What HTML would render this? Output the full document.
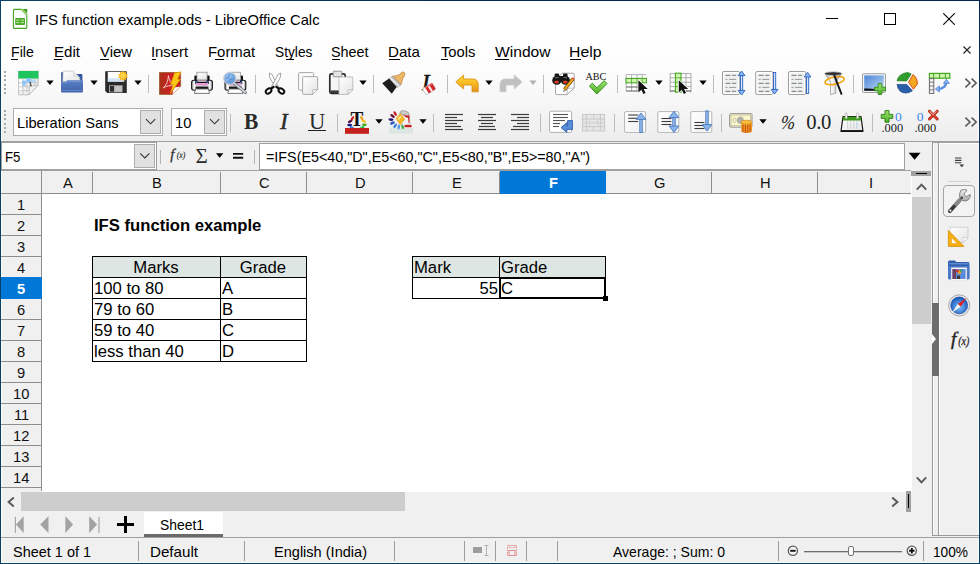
<!DOCTYPE html>
<html lang="en"><head><meta charset="utf-8"><title>IFS function example.ods - LibreOffice Calc</title>
<style>
html,body{margin:0;padding:0;background:#fff;}
body{width:980px;height:564px;overflow:hidden;font-family:"Liberation Sans",sans-serif;}
#win{position:relative;width:980px;height:564px;overflow:hidden;background:#fff;}
.b{position:absolute;box-sizing:border-box;display:block;}
.t{position:absolute;white-space:pre;font-family:"Liberation Sans",sans-serif;}
.ser{font-family:"Liberation Serif",serif;}
u.m{text-decoration:none;border-bottom:1px solid #000;}

</style></head>
<body>
<div id="win">
<div class="b " style="left:0px;top:0px;width:980px;height:1px;z-index:50;background:linear-gradient(90deg,#0a4468,#04244e 60%,#04244e);"></div>
<div class="b " style="left:979px;top:0px;width:1px;height:564px;z-index:50;background:linear-gradient(#04244e,#0a2f5c 30%,#07405f 90%);"></div>
<div class="b " style="left:0px;top:0px;width:1px;height:564px;z-index:50;background:linear-gradient(#0a4468,#06405f);"></div>
<div class="b " style="left:0px;top:563px;width:980px;height:1px;background:#06405f;z-index:51;"></div>
<div class="b " style="left:1px;top:1px;width:978px;height:37px;background:#fff;"></div>
<span class="t " style="left:34.8px;top:11.00px;font-size:15px;line-height:17.23px;color:#000;transform:scaleX(0.9844);transform-origin:0 0;">IFS function example.ods - LibreOffice Calc</span>
<svg class="b" style="left:0;top:0;" width="40" height="38" viewBox="0 0 40 38"><path d="M14.6 9.4 H21.4 L26.8 14.8 V27.4 Q26.8 28.4 25.8 28.4 H14.6 Q13.4 28.4 13.4 27.4 V10.4 Q13.4 9.4 14.6 9.4 Z" fill="#fff" stroke="#43a320" stroke-width="1.1"/><path d="M22.6 9 H27.2 V13.4 Z" fill="#3c9e1c"/><path d="M21.4 9.4 L26.8 14.8" stroke="#8fd06c" stroke-width="1.6"/><rect x="15.2" y="18" width="9.8" height="7" rx="0.8" fill="#4aa828"/><path d="M16.2 20.2 H19.4 M20.8 20.2 H24 M16.2 22.6 H19.4 M20.8 22.6 H24" stroke="#c8f0b0" stroke-width="1"/></svg>
<div class="b " style="left:826px;top:18px;width:12px;height:1px;background:#000;"></div>
<div class="b " style="left:884px;top:13px;width:12px;height:12px;border:1px solid #000;"></div>
<svg class="b" style="left:943px;top:13px;" width="12" height="12" viewBox="0 0 12 12"><path d="M0.3 0.3 L11.7 11.7 M11.7 0.3 L0.3 11.7" stroke="#000" stroke-width="1.1" fill="none"/></svg>
<div class="b " style="left:1px;top:38px;width:978px;height:103px;background:linear-gradient(#ffffff 0%,#fdfdfd 25%,#f7f7f7 60%,#ededed 100%);"></div>
<span class="t " style="left:11px;top:43.00px;font-size:15px;line-height:17.23px;color:#000;transform:scaleX(0.9433);transform-origin:0 0;">File</span>
<div class="b " style="left:11px;top:59px;width:7px;height:1px;background:#000;"></div>
<span class="t " style="left:54px;top:43.00px;font-size:15px;line-height:17.23px;color:#000;transform:scaleX(1.0059);transform-origin:0 0;">Edit</span>
<div class="b " style="left:54px;top:59px;width:8px;height:1px;background:#000;"></div>
<span class="t " style="left:100px;top:43.00px;font-size:15px;line-height:17.23px;color:#000;transform:scaleX(0.9925);transform-origin:0 0;">View</span>
<div class="b " style="left:100px;top:59px;width:9px;height:1px;background:#000;"></div>
<span class="t " style="left:151.4px;top:43.00px;font-size:15px;line-height:17.23px;color:#000;transform:scaleX(0.9863);transform-origin:0 0;">Insert</span>
<div class="b " style="left:152px;top:59px;width:4px;height:1px;background:#000;"></div>
<span class="t " style="left:207.8px;top:43.00px;font-size:15px;line-height:17.23px;color:#000;transform:scaleX(0.9936);transform-origin:0 0;">Format</span>
<div class="b " style="left:215px;top:59px;width:9px;height:1px;background:#000;"></div>
<span class="t " style="left:274.6px;top:43.00px;font-size:15px;line-height:17.23px;color:#000;transform:scaleX(0.9156);transform-origin:0 0;">Styles</span>
<div class="b " style="left:286px;top:59px;width:8px;height:1px;background:#000;"></div>
<span class="t " style="left:331.4px;top:43.00px;font-size:15px;line-height:17.23px;color:#000;transform:scaleX(0.9592);transform-origin:0 0;">Sheet</span>
<div class="b " style="left:332px;top:59px;width:8px;height:1px;background:#000;"></div>
<span class="t " style="left:388.2px;top:43.00px;font-size:15px;line-height:17.23px;color:#000;transform:scaleX(1.0100);transform-origin:0 0;">Data</span>
<div class="b " style="left:389px;top:59px;width:11px;height:1px;background:#000;"></div>
<span class="t " style="left:440.6px;top:43.00px;font-size:15px;line-height:17.23px;color:#000;transform:scaleX(0.9824);transform-origin:0 0;">Tools</span>
<div class="b " style="left:441px;top:59px;width:7px;height:1px;background:#000;"></div>
<span class="t " style="left:494.6px;top:43.00px;font-size:15px;line-height:17.23px;color:#000;transform:scaleX(1.0422);transform-origin:0 0;">Window</span>
<div class="b " style="left:495px;top:59px;width:14px;height:1px;background:#000;"></div>
<span class="t " style="left:569.2px;top:43.00px;font-size:15px;line-height:17.23px;color:#000;transform:scaleX(1.0502);transform-origin:0 0;">Help</span>
<div class="b " style="left:570px;top:59px;width:11px;height:1px;background:#000;"></div>
<svg class="b" style="left:963px;top:46px;" width="8" height="8" viewBox="0 0 8 8"><path d="M0.5 0.5 L7.5 7.5 M7.5 0.5 L0.5 7.5" stroke="#222" stroke-width="1.1" fill="none"/></svg>
<div class="b " style="left:4px;top:71px;width:2px;height:2px;background:#a8a8a8;"></div>
<div class="b " style="left:4px;top:75px;width:2px;height:2px;background:#a8a8a8;"></div>
<div class="b " style="left:4px;top:79px;width:2px;height:2px;background:#a8a8a8;"></div>
<div class="b " style="left:4px;top:84px;width:2px;height:2px;background:#a8a8a8;"></div>
<div class="b " style="left:4px;top:88px;width:2px;height:2px;background:#a8a8a8;"></div>
<div class="b " style="left:4px;top:92px;width:2px;height:2px;background:#a8a8a8;"></div>
<div class="b " style="left:4px;top:110px;width:2px;height:2px;background:#a8a8a8;"></div>
<div class="b " style="left:4px;top:114px;width:2px;height:2px;background:#a8a8a8;"></div>
<div class="b " style="left:4px;top:118px;width:2px;height:2px;background:#a8a8a8;"></div>
<div class="b " style="left:4px;top:123px;width:2px;height:2px;background:#a8a8a8;"></div>
<div class="b " style="left:4px;top:127px;width:2px;height:2px;background:#a8a8a8;"></div>
<div class="b " style="left:4px;top:131px;width:2px;height:2px;background:#a8a8a8;"></div>
<div class="b " style="left:148px;top:75px;width:1px;height:18px;background:#bcbcbc;"></div>
<div class="b " style="left:255px;top:75px;width:1px;height:18px;background:#bcbcbc;"></div>
<div class="b " style="left:373px;top:75px;width:1px;height:18px;background:#bcbcbc;"></div>
<div class="b " style="left:447px;top:75px;width:1px;height:18px;background:#bcbcbc;"></div>
<div class="b " style="left:543px;top:75px;width:1px;height:18px;background:#bcbcbc;"></div>
<div class="b " style="left:617px;top:75px;width:1px;height:18px;background:#bcbcbc;"></div>
<div class="b " style="left:713px;top:75px;width:1px;height:18px;background:#bcbcbc;"></div>
<div class="b " style="left:853px;top:75px;width:1px;height:18px;background:#bcbcbc;"></div>
<div class="b " style="left:230px;top:114px;width:1px;height:18px;background:#bcbcbc;"></div>
<div class="b " style="left:337px;top:114px;width:1px;height:18px;background:#bcbcbc;"></div>
<div class="b " style="left:433px;top:114px;width:1px;height:18px;background:#bcbcbc;"></div>
<div class="b " style="left:540px;top:114px;width:1px;height:18px;background:#bcbcbc;"></div>
<div class="b " style="left:614px;top:114px;width:1px;height:18px;background:#bcbcbc;"></div>
<div class="b " style="left:721px;top:114px;width:1px;height:18px;background:#bcbcbc;"></div>
<div class="b " style="left:872px;top:114px;width:1px;height:18px;background:#bcbcbc;"></div>
<svg class="b" style="left:45.8px;top:80px;" width="8" height="6" viewBox="0 0 8 6"><path d="M0.35 0.6 H7.65 L4 5 Z" fill="#000"/></svg>
<svg class="b" style="left:89.8px;top:80px;" width="8" height="6" viewBox="0 0 8 6"><path d="M0.35 0.6 H7.65 L4 5 Z" fill="#000"/></svg>
<svg class="b" style="left:133.8px;top:80px;" width="8" height="6" viewBox="0 0 8 6"><path d="M0.35 0.6 H7.65 L4 5 Z" fill="#000"/></svg>
<svg class="b" style="left:359px;top:80px;" width="8" height="6" viewBox="0 0 8 6"><path d="M0.35 0.6 H7.65 L4 5 Z" fill="#000"/></svg>
<svg class="b" style="left:484.8px;top:80px;" width="8" height="6" viewBox="0 0 8 6"><path d="M0.35 0.6 H7.65 L4 5 Z" fill="#000"/></svg>
<svg class="b" style="left:654.8px;top:80px;" width="8" height="6" viewBox="0 0 8 6"><path d="M0.35 0.6 H7.65 L4 5 Z" fill="#000"/></svg>
<svg class="b" style="left:698.9px;top:80px;" width="8" height="6" viewBox="0 0 8 6"><path d="M0.35 0.6 H7.65 L4 5 Z" fill="#000"/></svg>
<svg class="b" style="left:528.8px;top:80px;" width="8" height="6" viewBox="0 0 8 6"><path d="M0.35 0.6 H7.65 L4 5 Z" fill="#b0b0b0"/></svg>
<svg class="b" style="left:374.8px;top:119px;" width="8" height="6" viewBox="0 0 8 6"><path d="M0.35 0.2 H7.65 L4 4.7 Z" fill="#000"/></svg>
<svg class="b" style="left:419px;top:119px;" width="8" height="6" viewBox="0 0 8 6"><path d="M0.35 0.2 H7.65 L4 4.7 Z" fill="#000"/></svg>
<svg class="b" style="left:758.8px;top:119px;" width="8" height="6" viewBox="0 0 8 6"><path d="M0.35 0.2 H7.65 L4 4.7 Z" fill="#000"/></svg>
<svg class="b" style="left:964px;top:78px;" width="14" height="10" viewBox="0 0 14 10"><path d="M1.4 0.6 L6 5 L1.4 9.4 M7.6 0.6 L12.2 5 L7.6 9.4" stroke="#555" stroke-width="1.5" fill="none"/></svg>
<svg class="b" style="left:964px;top:117px;" width="14" height="10" viewBox="0 0 14 10"><path d="M1.4 0.6 L6 5 L1.4 9.4 M7.6 0.6 L12.2 5 L7.6 9.4" stroke="#555" stroke-width="1.5" fill="none"/></svg>
<div class="b " style="left:13px;top:108px;width:150px;height:28px;background:#fff;border:1px solid #adadad;"></div>
<span class="t " style="left:16.6px;top:114.00px;font-size:15px;line-height:17.23px;color:#000;transform:scaleX(0.9747);transform-origin:0 0;">Liberation Sans</span>
<div class="b " style="left:140px;top:110px;width:21px;height:24px;background:#e1e1e1;border:1px solid #adadad;"></div>
<svg class="b" style="left:145px;top:118px;" width="12" height="8" viewBox="0 0 12 8"><path d="M1 1.2 L5.6 5.8 L10.2 1.2" stroke="#333" stroke-width="1.1" fill="none"/></svg>
<div class="b " style="left:171px;top:108px;width:56px;height:28px;background:#fff;border:1px solid #adadad;"></div>
<span class="t " style="left:175px;top:114.00px;font-size:15px;line-height:17.23px;color:#000;transform:scaleX(0.9829);transform-origin:0 0;">10</span>
<div class="b " style="left:204px;top:110px;width:21px;height:24px;background:#e1e1e1;border:1px solid #adadad;"></div>
<svg class="b" style="left:209px;top:118px;" width="12" height="8" viewBox="0 0 12 8"><path d="M1 1.2 L5.6 5.8 L10.2 1.2" stroke="#333" stroke-width="1.1" fill="none"/></svg>
<span class="t ser" style="left:243.8px;top:107.4px;font-size:23.8px;line-height:28px;font-weight:bold;color:#2a2a2a;transform:scaleX(0.9);transform-origin:0 0;">B</span>
<span class="t ser" style="left:280px;top:107.2px;font-size:23.4px;line-height:28px;font-style:italic;color:#2a2a2a;-webkit-text-stroke:0.4px #2a2a2a;">I</span>
<span class="t ser" style="left:308.6px;top:107.4px;font-size:23.4px;line-height:28px;color:#2a2a2a;transform:scaleX(0.96);transform-origin:0 0;">U</span>
<div class="b " style="left:308px;top:130px;width:18px;height:1px;background:#222;"></div>
<span class="t ser" style="left:778.2px;top:109.6px;font-size:20px;line-height:24px;color:#222;transform:skewX(-14deg) scaleX(0.86);transform-origin:0 100%;">%</span>
<span class="t ser" style="left:806.2px;top:108.8px;font-size:20.6px;line-height:26px;color:#222;letter-spacing:-0.3px;">0.0</span>
<svg class="b" style="left:0;top:62px;" width="980" height="80" viewBox="0 62 980 80"><defs>
<linearGradient id="gPage" x1="0" y1="0" x2="1" y2="1"><stop offset="0" stop-color="#ffffff"/><stop offset="1" stop-color="#e4e4e4"/></linearGradient>
<linearGradient id="gBlue" x1="0" y1="0" x2="0" y2="1"><stop offset="0" stop-color="#2f6fd8"/><stop offset="1" stop-color="#6aa2ee"/></linearGradient>
<linearGradient id="gPrn" x1="0" y1="0" x2="1" y2="0"><stop offset="0" stop-color="#8e8e8e"/><stop offset="0.12" stop-color="#fafafa"/><stop offset="0.3" stop-color="#d0d0d0"/><stop offset="0.7" stop-color="#d0d0d0"/><stop offset="0.88" stop-color="#fafafa"/><stop offset="1" stop-color="#8e8e8e"/></linearGradient>
<linearGradient id="gUndo" x1="0" y1="0" x2="0" y2="1"><stop offset="0" stop-color="#ffdc3c"/><stop offset="0.5" stop-color="#f8b820"/><stop offset="1" stop-color="#e09020"/></linearGradient>
<linearGradient id="gFolder" x1="0" y1="0" x2="0" y2="1"><stop offset="0" stop-color="#5a80c4"/><stop offset="1" stop-color="#3f62aa"/></linearGradient>
<linearGradient id="gRed" x1="0" y1="0" x2="1" y2="0"><stop offset="0" stop-color="#a8341a"/><stop offset="0.5" stop-color="#cc2020"/><stop offset="1" stop-color="#c41c1c"/></linearGradient>
<linearGradient id="gSky" x1="0" y1="0" x2="1" y2="1"><stop offset="0" stop-color="#4f86d8"/><stop offset="0.6" stop-color="#8fb8ea"/><stop offset="1" stop-color="#d8e8f8"/></linearGradient>
<linearGradient id="gGreen" x1="0" y1="0" x2="0" y2="1"><stop offset="0" stop-color="#9ae46c"/><stop offset="1" stop-color="#4cae24"/></linearGradient>
<linearGradient id="gFunnel" x1="0" y1="0" x2="1" y2="0"><stop offset="0" stop-color="#9a9a9a"/><stop offset="0.4" stop-color="#ffffff"/><stop offset="1" stop-color="#8a8a8a"/></linearGradient>
<linearGradient id="gSilver" x1="0" y1="0" x2="0" y2="1"><stop offset="0" stop-color="#f2f2f2"/><stop offset="1" stop-color="#a8a8a8"/></linearGradient>
<radialGradient id="gLens" cx="0.4" cy="0.4" r="0.7"><stop offset="0" stop-color="#a8d0f8"/><stop offset="1" stop-color="#4a86d0"/></radialGradient>
<radialGradient id="gComp" cx="0.5" cy="0.6" r="0.6"><stop offset="0" stop-color="#7fc0ff"/><stop offset="1" stop-color="#1452b8"/></radialGradient>
</defs><path d="M18.6 71.2 H38.2 V85.2 L29 94.8 H18.6 Z" fill="url(#gPage)" stroke="#b4b4b4" stroke-width="0.8"/><rect x="18.4" y="71" width="20" height="7.6" fill="#1ec45e"/><path d="M23 78.6 V94 M27 78.6 V92 M31.2 78.6 V88 M35 78.6 V86 M18.6 82.6 H38 M18.6 86.6 H36 M18.6 90.6 H32" stroke="#c4c4c4" stroke-width="0.9" fill="none"/><rect x="26.2" y="78.2" width="5" height="4.4" fill="#8cc4fa"/><rect x="22.2" y="80.6" width="3.6" height="5" fill="#8cc4fa"/><rect x="31.6" y="79.6" width="3.6" height="2.6" fill="#b4d8fb"/><rect x="19.3" y="80" width="2.6" height="2.3" fill="#fff"/><rect x="19.3" y="84" width="2.6" height="2.3" fill="#fff"/><rect x="19.3" y="88" width="2.6" height="2.3" fill="#fff"/><path d="M30.3 82 v3.6 h1.6" stroke="#333" stroke-width="1" fill="none"/><path d="M38.2 85.2 L29 94.8 L29.6 86.6 Z" fill="#f2f2f2" stroke="#b0b0b0" stroke-width="0.7"/><path d="M61.2 73.2 Q61.2 72 62.4 72 H64 V83 H61.2 Z" fill="#2c4f96"/><path d="M72 74 H81.6 Q82.4 74 82.4 75 V83 H72 Z" fill="#3558a0"/><path d="M62.8 82 L63 72.6 Q63 71.2 64.6 71.2 H73.2 L79.6 77.6 L80 82 Z" fill="url(#gPage)" stroke="#c0c0c0" stroke-width="0.7"/><path d="M73.2 71.2 L79.6 77.6 L73 77 Z" fill="#e0e0e0"/><path d="M61 82.2 Q61 81.4 62 81.4 L66 81.4 L67.2 80.2 H82 Q83 80.2 83 81.2 V91.6 Q83 92.6 82 92.6 H62 Q61 92.6 61 91.6 Z" fill="url(#gFolder)"/><path d="M61.6 82.6 H66.4 L67.6 81.4 H82.4" stroke="#7c9ad4" stroke-width="0.8" fill="none"/><path d="M61.4 90.4 H82.6" stroke="#6f8fd0" stroke-width="0.8"/><path d="M105.2 71.2 H126.8 V93 H107.2 L105.2 91 Z" fill="#2a2a2a"/><rect x="107.8" y="72" width="16.4" height="9.6" fill="#fdfdfd"/><rect x="107.8" y="78.4" width="16.4" height="3.2" fill="#cfe2f8"/><rect x="109" y="85.2" width="13.6" height="7.2" fill="#a4a4a4"/><rect x="110" y="86" width="4" height="5.6" fill="#2e2e2e"/><rect x="114.6" y="86" width="7" height="5.8" fill="#c4c4c4"/><path d="M123 70.6 l1.1 2 2.1-1 -0.3 2.3 2.2 0.4 -1.6 1.6 1.6 1.6 -2.2 0.4 0.3 2.3 -2.1-1 -1.1 2 -1.1-2 -2.1 1 0.3-2.3 -2.2-0.4 1.6-1.6 -1.6-1.6 2.2-0.4 -0.3-2.3 2.1 1 Z" fill="#f8b818"/><circle cx="123" cy="75.6" r="2.6" fill="#fcd24a"/><path d="M159.5 72.5 H180.6 V86.4 L172.4 94.4 H159.5 Z" fill="url(#gRed)" stroke="#a8643c" stroke-width="1"/><path d="M163 88 C166 86 168 82 168.4 75.6 C169 80 171 84 174.4 86 C170 85 166 86 163 88 Z" fill="none" stroke="#f4d0d0" stroke-width="0.9"/><path d="M180.6 86.4 L172.4 94.4 L173.6 87.6 Z" fill="#fff4f0"/><path d="M174.6 72.8 L181 72 L177.6 79.2 L180.4 79.2 L170.4 93.6 L173 84.4 L170.6 84.4 Z" fill="#fbc812" stroke="#dc8a10" stroke-width="0.8" stroke-linejoin="round"/><rect x="194.4" y="75.4" width="15.2" height="9" rx="1" fill="#111"/><rect x="197" y="72.3" width="10" height="8.2" fill="url(#gPage)" stroke="#a5a5a5" stroke-width="0.8"/><rect x="191.6" y="80.2" width="20.8" height="10" rx="2.2" fill="url(#gPrn)" stroke="#1a1a1a" stroke-width="1.1"/><rect x="195.2" y="76" width="13.6" height="8" fill="#111"/><rect x="197" y="72.3" width="10" height="7.6" fill="url(#gPage)" stroke="#a5a5a5" stroke-width="0.8"/><rect x="197.4" y="80.4" width="9.2" height="1.4" fill="#f0d0e8"/><rect x="195.8" y="83" width="12.4" height="2.4" fill="#e59ad0"/><path d="M195.6 81.2 l1.4 1.8 M208.4 81.2 l-1.4 1.8" stroke="#3a6fd0" stroke-width="1.2"/><rect x="195.6" y="86.6" width="12.8" height="2.6" fill="#1a1a1a"/><path d="M195.6 89 H208.4 L209.6 93.4 H194.4 Z" fill="#fff" stroke="#6a6a6a" stroke-width="0.9"/><rect x="227.8" y="75.4" width="15.2" height="9" rx="1" fill="#111"/><rect x="230.4" y="72.3" width="10" height="8.2" fill="url(#gPage)" stroke="#a5a5a5" stroke-width="0.8"/><rect x="225.0" y="80.2" width="20.8" height="10" rx="2.2" fill="url(#gPrn)" stroke="#1a1a1a" stroke-width="1.1"/><rect x="228.6" y="76" width="13.6" height="8" fill="#111"/><rect x="230.4" y="72.3" width="10" height="7.6" fill="url(#gPage)" stroke="#a5a5a5" stroke-width="0.8"/><rect x="230.8" y="80.4" width="9.2" height="1.4" fill="#f0d0e8"/><rect x="229.20000000000002" y="83" width="12.4" height="2.4" fill="#e59ad0"/><path d="M229.0 81.2 l1.4 1.8 M241.8 81.2 l-1.4 1.8" stroke="#3a6fd0" stroke-width="1.2"/><rect x="229.0" y="86.6" width="12.8" height="2.6" fill="#1a1a1a"/><path d="M229.0 89 H241.8 L243.0 93.4 H227.8 Z" fill="#fff" stroke="#6a6a6a" stroke-width="0.9"/><path d="M234 83 L245.4 92.6" stroke="#707880" stroke-width="3" stroke-linecap="round"/><path d="M234 83 L245.2 92.4" stroke="#d8dde2" stroke-width="1.4" stroke-linecap="round"/><circle cx="229.8" cy="78.4" r="6" fill="url(#gLens)" stroke="#c4ccd4" stroke-width="1.3"/><path d="M226 78 h3 v-3 M230 82 v-3 h3" stroke="#2a64b8" stroke-width="0.9" fill="none" opacity="0.7"/><path d="M269.4 73 Q268.6 76 271 80 L276.6 88.4 L278.4 86.4 L271.6 74 Z" fill="#fff" stroke="#8c8c8c" stroke-width="0.8"/><path d="M280.6 73 Q281.4 76 279 80 L273.4 88.4 L271.6 86.4 L278.4 74 Z" fill="#fff" stroke="#8c8c8c" stroke-width="0.8"/><ellipse cx="268.6" cy="91" rx="3.2" ry="2.2" transform="rotate(-38 268.6 91)" fill="none" stroke="#0a0a0a" stroke-width="1.9"/><ellipse cx="281.4" cy="91" rx="3.2" ry="2.2" transform="rotate(38 281.4 91)" fill="none" stroke="#0a0a0a" stroke-width="1.9"/><path d="M271 88.6 L274.2 86.4 M279 88.6 L275.8 86.4" stroke="#0a0a0a" stroke-width="2.2"/><rect x="298.6" y="72.6" width="15.0" height="17.60000000000001" rx="0.9" fill="#fbfbfb" stroke="#a8a8a8" stroke-width="1"/><path d="M303.5 76.6 H316.70000000000005 Q317.6 76.6 317.6 77.5 V89.4 L312.6 94.4 H303.5 Q302.6 94.4 302.6 93.5 V77.5 Q302.6 76.6 303.5 76.6 Z" fill="url(#gPage)" stroke="#a8a8a8" stroke-width="1"/><path d="M317.6 89.4 L312.6 94.4 L312.90000000000003 89.7 Z" fill="#fff" stroke="#a8a8a8" stroke-width="0.8"/><rect x="329.8" y="73.8" width="15.4" height="19.6" rx="1.6" fill="#f6f6f6" stroke="#2a2a2a" stroke-width="1.7"/><rect x="330.6" y="90.4" width="14" height="2.6" fill="#3a3a3a"/><rect x="333.2" y="71.2" width="8.6" height="5.6" rx="0.8" fill="#e4e4e4" stroke="#8a8a8a" stroke-width="0.9"/><path d="M339 77 H352.8 V89.6 L348 94.4 H339 Z" fill="url(#gPage)" stroke="#b4b4b4" stroke-width="0.8"/><path d="M352.8 89.6 L348 94.4 L348.2 89.8 Z" fill="#fff" stroke="#a8a8a8" stroke-width="0.7"/><path d="M392.4 76.4 L396.8 75.6 Q399.6 75 401 73 Q402.6 71.4 404.2 72.4 Q405.6 73.6 404.4 75.8 Q402.4 78.4 402.2 80.6 L401 84.6 Z" fill="#eab868" stroke="#c8843a" stroke-width="0.8"/><path d="M389 78.8 L392.4 76.2 L401 84.8 L397 87.4 Z" fill="#c4c4c4" stroke="#8a8a8a" stroke-width="0.6"/><path d="M390.4 77.8 L399 86.2" stroke="#f4f4f4" stroke-width="1.2"/><path d="M382.2 83.2 L389 78.6 L396.6 87 L391.8 93.8 Z" fill="#1c1c1c"/><text x="422" y="90.2" font-family="Liberation Serif,serif" font-style="italic" font-size="22.4" stroke="#111" stroke-width="0.6" fill="#111">I</text><g transform="rotate(-32 429 89)"><rect x="423.4" y="85.4" width="11.4" height="7.2" rx="1.2" fill="#fff" stroke="#b0b0b0" stroke-width="0.7"/><rect x="426.4" y="85.4" width="8.4" height="7.2" rx="1" fill="#d42828"/><rect x="429.2" y="85.4" width="2.2" height="7.2" fill="#f4e8e8"/><rect x="426.4" y="85.4" width="8.4" height="1.2" fill="#e87070"/></g><path d="M455.8 82 L463.6 75 V79 H472.6 Q478.2 79 478.2 84.6 V91.8 H472 V86.6 Q472 85 470.4 85 H463.6 V89 Z" fill="url(#gUndo)" stroke="#dc9418" stroke-width="0.9" stroke-linejoin="round"/><path d="M522 82 L514.2 75 V79 H505.4 Q500 79 500 84.6 V91.8 H506 V86.6 Q506 85 507.6 85 H514.2 V89 Z" fill="#c0c0c0" stroke="#cacaca" stroke-width="0.8" stroke-linejoin="round"/><path d="M555.6 80 V93.4 Q555.6 94.6 556.8 94.6 H567 L574.2 88 V74.4 Q574.2 73.2 573 73.2 H562 Z" fill="#fff" stroke="#9a9a9a" stroke-width="0.9"/><path d="M567 94.6 L567.4 88.4 L574.2 88" fill="none" stroke="#b0b0b0" stroke-width="0.8"/><rect x="554.6" y="73.4" width="4.6" height="5" rx="1.4" fill="#161616"/><rect x="563" y="73.4" width="4.6" height="5" rx="1.4" fill="#161616"/><rect x="558.6" y="76" width="5" height="4" fill="#161616"/><ellipse cx="556.8" cy="80.4" rx="4.6" ry="4.4" fill="#161616"/><ellipse cx="565.4" cy="80.4" rx="4.6" ry="4.4" fill="#161616"/><ellipse cx="556.6" cy="82" rx="2.4" ry="1.6" fill="#d83820"/><ellipse cx="565.2" cy="82" rx="2.4" ry="1.6" fill="#d83820"/><path d="M555 77.6 h3.4 M563.6 77.6 h3.4" stroke="#8a8a8a" stroke-width="0.8"/><path d="M573.2 78.6 L564.4 89.6" stroke="#6a4a10" stroke-width="3.4" stroke-linecap="butt"/><path d="M573.2 78.6 L564.4 89.6" stroke="#f8a818" stroke-width="2" stroke-linecap="butt"/><path d="M564.9 89 L563 91.6 L566 90.4 Z" fill="#f0d8a8" stroke="#555" stroke-width="0.5"/><path d="M572.4 77.8 l1.8 1.4" stroke="#e04848" stroke-width="1.6"/><text x="585.4" y="80" font-family="Liberation Serif,serif" font-size="10.4" textLength="20.8" lengthAdjust="spacingAndGlyphs" fill="#111">ABC</text><path d="M589.4 86 L592.4 83.2 L596.8 87.8 L604.2 80.6 L607 83.6 L596.8 94 Z" fill="url(#gGreen)" stroke="#2e8a18" stroke-width="0.9" stroke-linejoin="round"/><rect x="626.2" y="74.6" width="20" height="16.4" fill="#fff"/><path d="M626.2 74.6 H646 M626.2 74.6 V91 M631.6 74.6 V91 M637 74.6 V91 M642.2 74.6 V91" stroke="#a8a8a8" stroke-width="0.9" fill="none"/><path d="M626.2 87 H640 M626.2 91 H640" stroke="#5a5a5a" stroke-width="1.1" fill="none"/><rect x="626" y="78.4" width="20.4" height="4.4" fill="#d0f4b0" stroke="#44a820" stroke-width="1.1"/><path d="M631.6 78.4 v4.4 M637 78.4 v4.4 M642.2 78.4 v4.4" stroke="#44a820" stroke-width="0.8"/><path d="M638.4 80.2 V92.4 L641.4 89.8 L643.4 94.0 L645.6 93.0 L643.6999999999999 89.0 H647.8 Z" fill="#111" stroke="#fff" stroke-width="1.3" stroke-linejoin="round" paint-order="stroke"/><rect x="670.2" y="73.6" width="20.8" height="18" fill="#fff"/><path d="M670.2 73.6 H691 M670.2 77.8 H691 M670.2 82.2 H691 M670.2 86.6 H691 M670.2 73.6 V92.4 M686 73.6 V92 M691 73.6 V92.4" stroke="#a0a0a0" stroke-width="0.9" fill="none"/><path d="M670.2 91 H691" stroke="#5a5a5a" stroke-width="1.1"/><rect x="675.4" y="73.2" width="5.6" height="19" fill="#d0f4b0" stroke="#44a820" stroke-width="1.1"/><path d="M675.4 77.8 h5.6 M675.4 82.2 h5.6 M675.4 86.6 h5.6" stroke="#44a820" stroke-width="0.8"/><path d="M678.8 80.2 V92.4 L681.8 89.8 L683.8 94.0 L686.0 93.0 L684.0999999999999 89.0 H688.1999999999999 Z" fill="#111" stroke="#fff" stroke-width="1.3" stroke-linejoin="round" paint-order="stroke"/><rect x="722.5" y="71.5" width="17.299999999999955" height="23.0" rx="1.5" fill="#fff" stroke="#9c9c9c" stroke-width="1"/><rect x="724.3" y="73.5" width="13.6" height="19.5" fill="#eef1ef"/><path d="M725.5 75.4 h5 M732 75.4 h4.2" stroke="#8f8f8f" stroke-width="1.1"/><path d="M725.5 79.4 h2 M729 79.4 h7.2" stroke="#9a9a9a" stroke-width="1"/><path d="M725.5 83.4 h5 M732 83.4 h4.2" stroke="#8f8f8f" stroke-width="1.1"/><path d="M725.5 87.4 h2 M729 87.4 h7.2" stroke="#9a9a9a" stroke-width="1"/><path d="M725.5 91.4 h5 M732 91.4 h4.2" stroke="#8f8f8f" stroke-width="1.1"/><rect x="740.5" y="75.1" width="2.2" height="15.800000000000011" fill="#d4e4fa" stroke="#2a62c4" stroke-width="0.9"/><path d="M741.6 71 L745.0 75.6 H738.2 Z" fill="#8fb8f0" stroke="#2a62c4" stroke-width="0.9" stroke-linejoin="round"/><path d="M741.6 95 L745.0 90.4 H738.2 Z" fill="#8fb8f0" stroke="#2a62c4" stroke-width="0.9" stroke-linejoin="round"/><rect x="755.7" y="71.5" width="17.299999999999955" height="23.0" rx="1.5" fill="#fff" stroke="#9c9c9c" stroke-width="1"/><rect x="757.5" y="73.5" width="13.6" height="19.5" fill="#eef1ef"/><path d="M758.7 75.4 h5 M765.2 75.4 h4.2" stroke="#8f8f8f" stroke-width="1.1"/><path d="M758.7 79.4 h2 M762.2 79.4 h7.2" stroke="#9a9a9a" stroke-width="1"/><path d="M758.7 83.4 h5 M765.2 83.4 h4.2" stroke="#8f8f8f" stroke-width="1.1"/><path d="M758.7 87.4 h2 M762.2 87.4 h7.2" stroke="#9a9a9a" stroke-width="1"/><path d="M758.7 91.4 h5 M765.2 91.4 h4.2" stroke="#8f8f8f" stroke-width="1.1"/><rect x="773.5" y="72.5" width="2.2" height="17.400000000000006" fill="#d4e4fa" stroke="#2a62c4" stroke-width="0.9"/><path d="M774.6 94 L778.0 89.4 H771.2 Z" fill="#8fb8f0" stroke="#2a62c4" stroke-width="0.9" stroke-linejoin="round"/><rect x="788.5" y="71.5" width="17.299999999999955" height="23.0" rx="1.5" fill="#fff" stroke="#9c9c9c" stroke-width="1"/><rect x="790.3" y="73.5" width="13.6" height="19.5" fill="#eef1ef"/><path d="M791.5 75.4 h5 M798 75.4 h4.2" stroke="#8f8f8f" stroke-width="1.1"/><path d="M791.5 79.4 h2 M795 79.4 h7.2" stroke="#9a9a9a" stroke-width="1"/><path d="M791.5 83.4 h5 M798 83.4 h4.2" stroke="#8f8f8f" stroke-width="1.1"/><path d="M791.5 87.4 h2 M795 87.4 h7.2" stroke="#9a9a9a" stroke-width="1"/><path d="M791.5 91.4 h5 M798 91.4 h4.2" stroke="#8f8f8f" stroke-width="1.1"/><rect x="806.5" y="76.5" width="2.2" height="17.0" fill="#d4e4fa" stroke="#2a62c4" stroke-width="0.9"/><path d="M807.6 72.4 L811.0 77.0 H804.2 Z" fill="#8fb8f0" stroke="#2a62c4" stroke-width="0.9" stroke-linejoin="round"/><path d="M825 73.6 H841.6 L835.8 82.4 V93.2 L830.6 94.6 V82.4 Z" fill="url(#gFunnel)" stroke="#8a8a8a" stroke-width="0.7"/><ellipse cx="833.2" cy="73.6" rx="8.4" ry="1.7" fill="#2a2a2a" stroke="#9a9a9a" stroke-width="0.7"/><ellipse cx="834.6" cy="80.6" rx="9.8" ry="3.6" transform="rotate(-12 834.6 80.6)" fill="none" stroke="#f4a410" stroke-width="1.6"/><path d="M834.4 75.6 L841.4 93.8" stroke="#141414" stroke-width="1.9" stroke-linecap="round"/><rect x="862.6" y="73.8" width="22.8" height="18.6" rx="1" fill="#fff" stroke="#8a8a8a" stroke-width="0.9"/><rect x="864.2" y="75.4" width="19.6" height="15.4" fill="url(#gSky)"/><path d="M864.2 88.6 Q872 88 883.8 90.4 V90.8 H864.2 Z" fill="#111"/><path d="M878.2 83.6 h3.6 v3.6 h3.6 v3.6 h-3.6 v3.6 h-3.6 v-3.6 h-3.6 v-3.6 h3.6 Z" fill="url(#gGreen)" stroke="#2e8a18" stroke-width="0.9" stroke-linejoin="round"/><path d="M897 80.8 Q898.6 73.6 907.6 72.4 L911.2 74 L906.6 81 Z" fill="#2f9e2c" stroke="#1f7a1c" stroke-width="0.7"/><path d="M913 74.6 Q917.6 78 917.4 84 L913.4 89.2 L908.6 82.2 Z" fill="#f4a820" stroke="#d04010" stroke-width="0.9" stroke-linejoin="round"/><path d="M897 84.4 H906.8 L912.4 90.8 Q906 95 900.4 91.4 Q897.4 88.6 897 84.4 Z" fill="#2a5eaa" stroke="#1c437c" stroke-width="0.7"/><rect x="929.4" y="73.4" width="20.4" height="4.8" fill="#d0f4b0" stroke="#44a820" stroke-width="1.2"/><path d="M933.6 73.4 v4.8 M939.6 73.4 v4.8 M945.4 73.4 v4.8" stroke="#44a820" stroke-width="1"/><rect x="929.4" y="78.6" width="4.4" height="14.8" fill="#f4f4f4" stroke="#6a6a6a" stroke-width="1"/><path d="M929.4 82.2 h4.4 M929.4 86 h4.4 M929.4 89.8 h4.4" stroke="#6a6a6a" stroke-width="0.9"/><path d="M938.4 89 Q945.6 88.6 946.4 82" fill="none" stroke="#5a90e0" stroke-width="2.2"/><path d="M935.4 89 L939.4 86 V92 Z M946.4 79.2 L949.4 83.4 H943.4 Z" fill="#8ab4f0" stroke="#4a80d8" stroke-width="0.8" stroke-linejoin="round"/><ellipse cx="352.4" cy="118.4" rx="2.5" ry="1.25" transform="rotate(-55 352.4 118.4)" fill="#d02020"/><ellipse cx="350.2" cy="121.4" rx="2.5" ry="1.25" transform="rotate(-25 350.2 121.4)" fill="#5a1040"/><ellipse cx="349.6" cy="125" rx="2.5" ry="1.25" transform="rotate(0 349.6 125)" fill="#1a1a8a"/><ellipse cx="351.8" cy="127.6" rx="2.5" ry="1.25" transform="rotate(20 351.8 127.6)" fill="#3a7ae0"/><ellipse cx="361.8" cy="118.2" rx="2.5" ry="1.25" transform="rotate(55 361.8 118.2)" fill="#f0a020"/><ellipse cx="363.8" cy="121.2" rx="2.5" ry="1.25" transform="rotate(25 363.8 121.2)" fill="#f8c820"/><ellipse cx="364.4" cy="124.8" rx="2.5" ry="1.25" transform="rotate(0 364.4 124.8)" fill="#4aa828"/><ellipse cx="362.2" cy="127.6" rx="2.5" ry="1.25" transform="rotate(-20 362.2 127.6)" fill="#20c040"/><text x="350.6" y="125.6" font-family="Liberation Serif,serif" font-weight="bold" font-size="20.4" textLength="12.8" lengthAdjust="spacingAndGlyphs" fill="#111">T</text><rect x="345" y="128" width="24" height="5.8" fill="#c4201c"/><rect x="389.2" y="128" width="23.8" height="5.8" fill="#dee6e3"/><ellipse cx="395.2" cy="113.6" rx="2.6" ry="1.3" transform="rotate(60 395.2 113.6)" fill="#d02020"/><ellipse cx="392.6" cy="116" rx="2.6" ry="1.3" transform="rotate(35 392.6 116)" fill="#6a1030"/><ellipse cx="391" cy="119.6" rx="2.6" ry="1.3" transform="rotate(5 391 119.6)" fill="#2a1a7a"/><ellipse cx="392.4" cy="123" rx="2.6" ry="1.3" transform="rotate(-25 392.4 123)" fill="#2a5ac0"/><ellipse cx="395.2" cy="125.8" rx="2.6" ry="1.3" transform="rotate(-55 395.2 125.8)" fill="#3a80e0"/><ellipse cx="398.8" cy="127" rx="2.6" ry="1.3" transform="rotate(-80 398.8 127)" fill="#5a9af0"/><ellipse cx="402.6" cy="126.6" rx="2.6" ry="1.3" transform="rotate(-100 402.6 126.6)" fill="#30b030"/><path d="M400 112 Q405 110.4 409 113.6 L410 124 L403 126 L399 116 Z" fill="#f4f4f4" stroke="#b0b0b0" stroke-width="0.7"/><ellipse cx="404.6" cy="113" rx="4.4" ry="2" transform="rotate(15 404.6 113)" fill="#d0d0d0" stroke="#909090" stroke-width="0.7"/><path d="M403 114.6 Q406 116.4 409.4 115.2 L409.4 123.4 Q408.4 123.6 408.4 121 L408 117.6 Q405 118 403 114.6 Z M404.6 125 H411.6 V127.2 H404.6 Z" fill="#c8201c"/><path d="M396.2 118.4 L400.6 113.6 L404.6 119.4 L400.2 124.6 Z" fill="#f8b820" stroke="#e09010" stroke-width="0.6"/><path d="M397.6 118.6 L400.6 115.4 L401.6 117 L398.8 120.2 Z" fill="#fde08a"/><path d="M445 114.5 H463" stroke="#3c3c3c" stroke-width="1.2"/><path d="M445 117.5 H457" stroke="#3c3c3c" stroke-width="1.2"/><path d="M445 120.5 H463" stroke="#3c3c3c" stroke-width="1.2"/><path d="M445 123.5 H457" stroke="#3c3c3c" stroke-width="1.2"/><path d="M445 126.5 H461" stroke="#3c3c3c" stroke-width="1.2"/><path d="M445 129.5 H463" stroke="#3c3c3c" stroke-width="1.2"/><path d="M478 114.5 H496" stroke="#3c3c3c" stroke-width="1.2"/><path d="M481 117.5 H493" stroke="#3c3c3c" stroke-width="1.2"/><path d="M478 120.5 H496" stroke="#3c3c3c" stroke-width="1.2"/><path d="M481 123.5 H493" stroke="#3c3c3c" stroke-width="1.2"/><path d="M479 126.5 H495" stroke="#3c3c3c" stroke-width="1.2"/><path d="M478 129.5 H496" stroke="#3c3c3c" stroke-width="1.2"/><path d="M511 114.5 H529" stroke="#3c3c3c" stroke-width="1.2"/><path d="M517 117.5 H529" stroke="#3c3c3c" stroke-width="1.2"/><path d="M511 120.5 H529" stroke="#3c3c3c" stroke-width="1.2"/><path d="M517 123.5 H529" stroke="#3c3c3c" stroke-width="1.2"/><path d="M513 126.5 H529" stroke="#3c3c3c" stroke-width="1.2"/><path d="M511 129.5 H529" stroke="#3c3c3c" stroke-width="1.2"/><rect x="549.6" y="111.2" width="22.0" height="21.200000000000003" rx="1.2" fill="#fff" stroke="#b0b0b0" stroke-width="1"/><path d="M553 114.5 H568" stroke="#555" stroke-width="1.1"/><path d="M553 117.5 H568" stroke="#555" stroke-width="1.1"/><path d="M553 120.5 H565" stroke="#555" stroke-width="1.1"/><path d="M553 123.5 H560" stroke="#555" stroke-width="1.1"/><path d="M553 126.5 H559" stroke="#555" stroke-width="1.1"/><path d="M567.6 120.6 H572.4 V129.4 H566.8 V132.4 L561 127.6 L566.8 122.8 V125.8 H567.6 Z" fill="#5a8ed8" stroke="#2a5cae" stroke-width="0.9" stroke-linejoin="round"/><rect x="582.4" y="114.4" width="22.2" height="16.6" fill="#e6e6e6" stroke="#c6c6c6" stroke-width="0.9"/><path d="M586.6 114.4 V131 M600.4 114.4 V131 M593.6 114.4 V119 M593.6 126.6 V131 M582.4 119 H604.6 M582.4 123 H586.6 M600.4 123 H604.6 M582.4 126.6 H604.6" stroke="#c6c6c6" stroke-width="0.9" fill="none"/><path d="M588.4 122.8 H598.8 M590.4 120.8 L588.2 122.8 L590.4 124.8 M596.8 120.8 L599 122.8 L596.8 124.8" stroke="#cfcfcf" stroke-width="1" fill="none"/><rect x="624.6" y="111.6" width="21.0" height="20.80000000000001" rx="1.4" fill="#fff" stroke="#b4b4b4" stroke-width="1"/><rect x="626.2" y="113" width="17.8" height="18" fill="url(#gPage)" opacity="0.6"/><path d="M628.2 115 H638.2" stroke="#3c3c3c" stroke-width="1.1"/><path d="M628.2 118.3 H638.2" stroke="#3c3c3c" stroke-width="1.1"/><path d="M628.2 121.5 H638.2" stroke="#3c3c3c" stroke-width="1.1"/><rect x="639.8" y="118.9" width="2.4" height="13.599999999999994" fill="#9cc0ee" stroke="#4a78bc" stroke-width="0.9"/><path d="M641 113 L645.8 119.4 H636.2 Z" fill="#8ab6ec" stroke="#4a78bc" stroke-width="0.9" stroke-linejoin="round"/><rect x="657.8" y="111.6" width="21.0" height="20.80000000000001" rx="1.4" fill="#fff" stroke="#b4b4b4" stroke-width="1"/><rect x="659.4" y="113" width="17.8" height="18" fill="url(#gPage)" opacity="0.6"/><path d="M661.4 118.5 H671.4" stroke="#3c3c3c" stroke-width="1.1"/><path d="M661.4 121.5 H671.4" stroke="#3c3c3c" stroke-width="1.1"/><path d="M661.4 124.5 H671.4" stroke="#3c3c3c" stroke-width="1.1"/><rect x="672.8" y="117.10000000000001" width="2.4" height="9.399999999999991" fill="#9cc0ee" stroke="#4a78bc" stroke-width="0.9"/><path d="M674 111.2 L678.8 117.60000000000001 H669.2 Z" fill="#8ab6ec" stroke="#4a78bc" stroke-width="0.9" stroke-linejoin="round"/><path d="M674 132.4 L678.8 126.0 H669.2 Z" fill="#8ab6ec" stroke="#4a78bc" stroke-width="0.9" stroke-linejoin="round"/><rect x="690.8" y="111.6" width="21.0" height="20.80000000000001" rx="1.4" fill="#fff" stroke="#b4b4b4" stroke-width="1"/><rect x="692.4" y="113" width="17.8" height="18" fill="url(#gPage)" opacity="0.6"/><path d="M694.4 122.5 H704.4" stroke="#3c3c3c" stroke-width="1.1"/><path d="M694.4 125.5 H704.4" stroke="#3c3c3c" stroke-width="1.1"/><path d="M694.4 128.5 H704.4" stroke="#3c3c3c" stroke-width="1.1"/><rect x="705.8" y="110.9" width="2.4" height="14.199999999999989" fill="#9cc0ee" stroke="#4a78bc" stroke-width="0.9"/><path d="M707 131 L711.8 124.6 H702.2 Z" fill="#8ab6ec" stroke="#4a78bc" stroke-width="0.9" stroke-linejoin="round"/><rect x="729.6" y="113.6" width="22.4" height="13.6" rx="1" fill="#fdf8cc" stroke="#8a8a8a" stroke-width="0.9"/><rect x="731" y="115" width="19.6" height="10.8" fill="none" stroke="#a8a890" stroke-width="0.7"/><ellipse cx="740.4" cy="120.2" rx="3.4" ry="3.8" fill="#b0b0a8"/><ellipse cx="734.6" cy="120.2" rx="1.8" ry="2.6" fill="#e8e4c0" stroke="#b8b8a0" stroke-width="0.5"/><path d="M741.2 122.2 Q746.6 118.6 752 122.2 V131.4 Q746.6 134.6 741.2 131.4 Z" fill="#f0a020"/><ellipse cx="746.6" cy="122.2" rx="5.4" ry="2" fill="#f8c040" stroke="#d07810" stroke-width="0.6"/><path d="M743 124.6 V132.2 M745.4 125 V133 M747.8 125 V133 M750.2 124.6 V132.2" stroke="#c03818" stroke-width="0.9"/><path d="M843 116.6 H861 L863 131.4 H841 Z" fill="url(#gPage)" stroke="#1c1c1c" stroke-width="1.2" stroke-linejoin="round"/><path d="M843.2 116.8 H860.8 L861.4 120.6 H842.6 Z" fill="#3c9a1c"/><path d="M841 131 H863" stroke="#111" stroke-width="1.8"/><rect x="845.2" y="113" width="2" height="5.6" rx="0.6" fill="#fff" stroke="#9a9a9a" stroke-width="0.6"/><rect x="856.6" y="113" width="2" height="5.6" rx="0.6" fill="#fff" stroke="#9a9a9a" stroke-width="0.6"/><rect x="847.0" y="121.4" width="1.1" height="1" fill="#b8b8b8"/><rect x="850.1" y="121.4" width="1.1" height="1" fill="#b8b8b8"/><rect x="853.2" y="121.4" width="1.1" height="1" fill="#b8b8b8"/><rect x="856.3" y="121.4" width="1.1" height="1" fill="#8ab4f0"/><rect x="847.0" y="123.4" width="1.1" height="1" fill="#b8b8b8"/><rect x="850.1" y="123.4" width="1.1" height="1" fill="#b8b8b8"/><rect x="853.2" y="123.4" width="1.1" height="1" fill="#b8b8b8"/><rect x="856.3" y="123.4" width="1.1" height="1" fill="#8ab4f0"/><rect x="847.0" y="125.4" width="1.1" height="1" fill="#b8b8b8"/><rect x="850.1" y="125.4" width="1.1" height="1" fill="#b8b8b8"/><rect x="853.2" y="125.4" width="1.1" height="1" fill="#b8b8b8"/><rect x="856.3" y="125.4" width="1.1" height="1" fill="#8ab4f0"/><rect x="847.0" y="127.4" width="1.1" height="1" fill="#b8b8b8"/><rect x="850.1" y="127.4" width="1.1" height="1" fill="#b8b8b8"/><rect x="853.2" y="127.4" width="1.1" height="1" fill="#b8b8b8"/><rect x="856.3" y="127.4" width="1.1" height="1" fill="#8ab4f0"/><path d="M885 110.6 h4 v3.8 h3.8 v4 h-3.8 v3.8 h-4 v-3.8 h-3.8 v-4 h3.8 Z" fill="url(#gGreen)" stroke="#2a7c12" stroke-width="0.9" stroke-linejoin="round"/><text x="895" y="121" font-family="Liberation Serif,serif" font-size="13" textLength="6.8" lengthAdjust="spacingAndGlyphs" fill="#3a86e8">0</text><text x="881.4" y="131.6" font-family="Liberation Serif,serif" font-size="13" textLength="21.8" lengthAdjust="spacingAndGlyphs" fill="#1a1a1a">.000</text><text x="916.8" y="121" font-family="Liberation Serif,serif" font-size="13" textLength="6.8" lengthAdjust="spacingAndGlyphs" fill="#3a86e8">0</text><text x="914.4" y="131.6" font-family="Liberation Serif,serif" font-size="13" textLength="21.8" lengthAdjust="spacingAndGlyphs" fill="#1a1a1a">.000</text><path d="M929.4 111.2 L937.2 119 M937.2 111.2 L929.4 119" stroke="#a83820" stroke-width="3" stroke-linecap="round"/><path d="M929.4 111.2 L937.2 119 M937.2 111.2 L929.4 119" stroke="#d43a28" stroke-width="1.8" stroke-linecap="round"/><path d="M930 111.6 L932.6 114.4 M936 111.6 L933.4 114.4" stroke="#f0b8b8" stroke-width="1" stroke-linecap="round"/></svg>
<div class="b " style="left:1px;top:141px;width:978px;height:1px;background:#a0a0a0;"></div>
<div class="b " style="left:1px;top:142px;width:930px;height:29px;background:#f0f0f0;"></div>
<div class="b " style="left:1px;top:170px;width:910px;height:1px;background:#a0a0a0;"></div>
<div class="b " style="left:1px;top:142px;width:156px;height:28px;background:#fff;border:1px solid #a0a0a0;"></div>
<span class="t " style="left:4.6px;top:148.00px;font-size:15px;line-height:17.23px;color:#000;transform:scaleX(0.8797);transform-origin:0 0;">F5</span>
<div class="b " style="left:134px;top:144px;width:21px;height:24px;background:#e1e1e1;border:1px solid #adadad;"></div>
<svg class="b" style="left:139px;top:152px;" width="12" height="8" viewBox="0 0 12 8"><path d="M1.2 1.4 L5.8 6 L10.4 1.4" stroke="#333" stroke-width="1.1" fill="none"/></svg>
<div class="b " style="left:160px;top:150px;width:1px;height:14px;background:#b4b4b4;"></div>
<svg class="b" style="left:160px;top:143px;" width="96" height="26" viewBox="160 143 96 26"><text x="170.2" y="158.7" font-family="Liberation Serif,serif" font-style="italic" font-size="14.8" stroke="#2a2a2a" stroke-width="0.3" fill="#2a2a2a" style="text-rendering:geometricPrecision">f</text><text x="176.8" y="157.8" font-family="Liberation Serif,serif" font-style="italic" font-size="9.4" textLength="8.4" lengthAdjust="spacingAndGlyphs" stroke="#2a2a2a" stroke-width="0.2" fill="#2a2a2a" style="text-rendering:geometricPrecision">(x)</text><text x="195.4" y="163" font-family="Liberation Serif,serif" font-size="21" textLength="12.2" lengthAdjust="spacingAndGlyphs" fill="#2a2a2a">Σ</text><path d="M216 153.2 H223.4 L219.7 157.8 Z" fill="#000"/><path d="M233 153.9 H243.2 M233 157.8 H243.2" stroke="#111" stroke-width="1.9"/></svg>
<div class="b " style="left:254px;top:150px;width:1px;height:14px;background:#b4b4b4;"></div>
<div class="b " style="left:259px;top:143px;width:646px;height:27px;background:#fff;border:1px solid #a0a0a0;"></div>
<span class="t " style="left:266px;top:148.00px;font-size:15px;line-height:17.23px;color:#000;transform:scaleX(0.9545);transform-origin:0 0;">=IFS(E5&lt;40,&quot;D&quot;,E5&lt;60,&quot;C&quot;,E5&lt;80,&quot;B&quot;,E5&gt;=80,&quot;A&quot;)</span>
<svg class="b" style="left:908px;top:152px;" width="14" height="9" viewBox="0 0 14 9"><path d="M0.7 0.8 H12.5 L6.6 7.8 Z" fill="#000"/></svg>
<div class="b " style="left:1px;top:171px;width:910px;height:321px;background:#fff;"></div>
<div class="b " style="left:1px;top:171px;width:910px;height:23px;background:#f0f0f0;"></div>
<div class="b " style="left:1px;top:193px;width:910px;height:1px;background:#8e8e8e;"></div>
<div class="b " style="left:41px;top:171px;width:1px;height:23px;background:#8e8e8e;"></div>
<div class="b " style="left:92px;top:172px;width:1px;height:22px;background:#8e8e8e;"></div>
<span class="t " style="left:62.9px;top:174.00px;font-size:15px;line-height:17.23px;color:#111;transform:scaleX(0.9800);transform-origin:0 0;">A</span>
<div class="b " style="left:220px;top:172px;width:1px;height:22px;background:#8e8e8e;"></div>
<span class="t " style="left:152.4px;top:174.00px;font-size:15px;line-height:17.23px;color:#111;transform:scaleX(0.9800);transform-origin:0 0;">B</span>
<div class="b " style="left:306px;top:172px;width:1px;height:22px;background:#8e8e8e;"></div>
<span class="t " style="left:259.0px;top:174.00px;font-size:15px;line-height:17.23px;color:#111;transform:scaleX(0.9800);transform-origin:0 0;">C</span>
<div class="b " style="left:412px;top:172px;width:1px;height:22px;background:#8e8e8e;"></div>
<span class="t " style="left:355.0px;top:174.00px;font-size:15px;line-height:17.23px;color:#111;transform:scaleX(0.9800);transform-origin:0 0;">D</span>
<div class="b " style="left:499px;top:172px;width:1px;height:22px;background:#8e8e8e;"></div>
<span class="t " style="left:451.9px;top:174.00px;font-size:15px;line-height:17.23px;color:#111;transform:scaleX(0.9800);transform-origin:0 0;">E</span>
<div class="b " style="left:500px;top:171px;width:106px;height:23px;background:#0078d7;"></div>
<span class="t " style="left:548.8px;top:174.00px;font-size:15px;line-height:17.23px;color:#fff;transform:scaleX(0.9800);transform-origin:0 0;font-weight:bold;">F</span>
<div class="b " style="left:711px;top:172px;width:1px;height:22px;background:#8e8e8e;"></div>
<span class="t " style="left:653.6px;top:174.00px;font-size:15px;line-height:17.23px;color:#111;transform:scaleX(0.9800);transform-origin:0 0;">G</span>
<div class="b " style="left:817px;top:172px;width:1px;height:22px;background:#8e8e8e;"></div>
<span class="t " style="left:760.0px;top:174.00px;font-size:15px;line-height:17.23px;color:#111;transform:scaleX(0.9800);transform-origin:0 0;">H</span>
<span class="t " style="left:869.0px;top:174.00px;font-size:15px;line-height:17.23px;color:#111;transform:scaleX(0.9800);transform-origin:0 0;">I</span>
<div class="b " style="left:1px;top:194px;width:41px;height:298px;background:#f0f0f0;"></div>
<div class="b " style="left:41px;top:194px;width:1px;height:297px;background:#8e8e8e;"></div>
<div class="b " style="left:1px;top:214px;width:41px;height:1px;background:#8e8e8e;"></div>
<span class="t " style="left:17.2px;top:196.00px;font-size:15px;line-height:17.23px;color:#111;transform:scaleX(0.9800);transform-origin:0 0;">1</span>
<div class="b " style="left:1px;top:235px;width:41px;height:1px;background:#8e8e8e;"></div>
<span class="t " style="left:17.2px;top:217.00px;font-size:15px;line-height:17.23px;color:#111;transform:scaleX(0.9800);transform-origin:0 0;">2</span>
<div class="b " style="left:1px;top:256px;width:41px;height:1px;background:#8e8e8e;"></div>
<span class="t " style="left:17.2px;top:238.00px;font-size:15px;line-height:17.23px;color:#111;transform:scaleX(0.9800);transform-origin:0 0;">3</span>
<div class="b " style="left:1px;top:277px;width:41px;height:1px;background:#8e8e8e;"></div>
<span class="t " style="left:17.2px;top:259.00px;font-size:15px;line-height:17.23px;color:#111;transform:scaleX(0.9800);transform-origin:0 0;">4</span>
<div class="b " style="left:1px;top:277px;width:41px;height:22px;background:#0078d7;"></div>
<span class="t " style="left:17.2px;top:280.00px;font-size:15px;line-height:17.23px;color:#fff;transform:scaleX(0.9800);transform-origin:0 0;font-weight:bold;">5</span>
<div class="b " style="left:1px;top:319px;width:41px;height:1px;background:#8e8e8e;"></div>
<span class="t " style="left:17.2px;top:301.00px;font-size:15px;line-height:17.23px;color:#111;transform:scaleX(0.9800);transform-origin:0 0;">6</span>
<div class="b " style="left:1px;top:340px;width:41px;height:1px;background:#8e8e8e;"></div>
<span class="t " style="left:17.2px;top:322.00px;font-size:15px;line-height:17.23px;color:#111;transform:scaleX(0.9800);transform-origin:0 0;">7</span>
<div class="b " style="left:1px;top:361px;width:41px;height:1px;background:#8e8e8e;"></div>
<span class="t " style="left:17.2px;top:343.00px;font-size:15px;line-height:17.23px;color:#111;transform:scaleX(0.9800);transform-origin:0 0;">8</span>
<div class="b " style="left:1px;top:382px;width:41px;height:1px;background:#8e8e8e;"></div>
<span class="t " style="left:17.2px;top:364.00px;font-size:15px;line-height:17.23px;color:#111;transform:scaleX(0.9800);transform-origin:0 0;">9</span>
<div class="b " style="left:1px;top:403px;width:41px;height:1px;background:#8e8e8e;"></div>
<span class="t " style="left:13.1px;top:385.00px;font-size:15px;line-height:17.23px;color:#111;transform:scaleX(0.9800);transform-origin:0 0;">10</span>
<div class="b " style="left:1px;top:424px;width:41px;height:1px;background:#8e8e8e;"></div>
<span class="t " style="left:13.7px;top:406.00px;font-size:15px;line-height:17.23px;color:#111;transform:scaleX(0.9800);transform-origin:0 0;">11</span>
<div class="b " style="left:1px;top:445px;width:41px;height:1px;background:#8e8e8e;"></div>
<span class="t " style="left:13.1px;top:427.00px;font-size:15px;line-height:17.23px;color:#111;transform:scaleX(0.9800);transform-origin:0 0;">12</span>
<div class="b " style="left:1px;top:466px;width:41px;height:1px;background:#8e8e8e;"></div>
<span class="t " style="left:13.1px;top:448.00px;font-size:15px;line-height:17.23px;color:#111;transform:scaleX(0.9800);transform-origin:0 0;">13</span>
<div class="b " style="left:1px;top:487px;width:41px;height:1px;background:#8e8e8e;"></div>
<span class="t " style="left:13.1px;top:469.00px;font-size:15px;line-height:17.23px;color:#111;transform:scaleX(0.9800);transform-origin:0 0;">14</span>
<span class="t " style="left:94px;top:216.00px;font-size:16.67px;line-height:19.15px;color:#000;letter-spacing:-0.008px;font-weight:bold;">IFS function example</span>
<div class="b " style="left:93px;top:257px;width:213px;height:20px;background:#dee6e3;"></div>
<div class="b " style="left:413px;top:257px;width:192px;height:20px;background:#dee6e3;"></div>
<div class="b " style="left:92px;top:256px;width:215px;height:1px;background:#000;"></div>
<div class="b " style="left:92px;top:277px;width:215px;height:1px;background:#000;"></div>
<div class="b " style="left:92px;top:298px;width:215px;height:1px;background:#000;"></div>
<div class="b " style="left:92px;top:319px;width:215px;height:1px;background:#000;"></div>
<div class="b " style="left:92px;top:340px;width:215px;height:1px;background:#000;"></div>
<div class="b " style="left:92px;top:361px;width:215px;height:1px;background:#000;"></div>
<div class="b " style="left:92px;top:256px;width:1px;height:106px;background:#000;"></div>
<div class="b " style="left:220px;top:256px;width:1px;height:106px;background:#000;"></div>
<div class="b " style="left:306px;top:256px;width:1px;height:106px;background:#000;"></div>
<div class="b " style="left:412px;top:256px;width:194px;height:1px;background:#000;"></div>
<div class="b " style="left:412px;top:277px;width:194px;height:1px;background:#000;"></div>
<div class="b " style="left:412px;top:298px;width:194px;height:1px;background:#000;"></div>
<div class="b " style="left:412px;top:256px;width:1px;height:43px;background:#000;"></div>
<div class="b " style="left:499px;top:256px;width:1px;height:43px;background:#000;"></div>
<div class="b " style="left:605px;top:256px;width:1px;height:43px;background:#000;"></div>
<div class="b " style="left:499px;top:277px;width:107px;height:22px;border:2px solid #000;"></div>
<div class="b " style="left:603px;top:296px;width:5px;height:5px;background:#000;"></div>
<span class="t " style="left:133.3px;top:258.00px;font-size:16.67px;line-height:19.15px;color:#000;">Marks</span>
<span class="t " style="left:239.8px;top:258.00px;font-size:16.67px;line-height:19.15px;color:#000;">Grade</span>
<span class="t " style="left:94px;top:279.00px;font-size:16.67px;line-height:19.15px;color:#000;">100 to 80</span>
<span class="t " style="left:94px;top:300.00px;font-size:16.67px;line-height:19.15px;color:#000;">79 to 60</span>
<span class="t " style="left:94px;top:321.00px;font-size:16.67px;line-height:19.15px;color:#000;">59 to 40</span>
<span class="t " style="left:94px;top:342.00px;font-size:16.67px;line-height:19.15px;color:#000;">less than 40</span>
<span class="t " style="left:222px;top:279.00px;font-size:16.67px;line-height:19.15px;color:#000;">A</span>
<span class="t " style="left:222px;top:300.00px;font-size:16.67px;line-height:19.15px;color:#000;">B</span>
<span class="t " style="left:222px;top:321.00px;font-size:16.67px;line-height:19.15px;color:#000;">C</span>
<span class="t " style="left:222px;top:342.00px;font-size:16.67px;line-height:19.15px;color:#000;">D</span>
<span class="t " style="left:414px;top:258.00px;font-size:16.67px;line-height:19.15px;color:#000;">Mark</span>
<span class="t " style="left:501px;top:258.00px;font-size:16.67px;line-height:19.15px;color:#000;">Grade</span>
<span class="t " style="left:479.5px;top:279.00px;font-size:16.67px;line-height:19.15px;color:#000;">55</span>
<span class="t " style="left:501px;top:279.00px;font-size:16.67px;line-height:19.15px;color:#000;">C</span>
<div class="b " style="left:911px;top:194px;width:1px;height:298px;background:#fff;"></div>
<div class="b " style="left:912px;top:171px;width:20px;height:321px;background:#f0f0f0;"></div>
<div class="b " style="left:911px;top:171px;width:21px;height:5px;background:#a0a0a0;"></div>
<div class="b " style="left:916px;top:173px;width:11px;height:1px;background:#000;"></div>
<svg class="b" style="left:915px;top:182px;" width="13" height="9" viewBox="0 0 13 9"><path d="M1.8 7.6 L6.5 2.6 L11.2 7.6" stroke="#5a5a5a" stroke-width="2" fill="none"/></svg>
<div class="b " style="left:912px;top:197px;width:19px;height:127px;background:#cdcdcd;"></div>
<svg class="b" style="left:915px;top:476px;" width="13" height="9" viewBox="0 0 13 9"><path d="M1.8 1.4 L6.5 6.4 L11.2 1.4" stroke="#5a5a5a" stroke-width="2" fill="none"/></svg>
<div class="b " style="left:931px;top:142px;width:48px;height:396px;background:#f0f0f0;"></div>
<div class="b " style="left:932px;top:142px;width:1px;height:394px;background:#9a9a9a;"></div>
<div class="b " style="left:938px;top:142px;width:1px;height:394px;background:#9a9a9a;"></div>
<div class="b " style="left:932px;top:535px;width:47px;height:1px;background:#9a9a9a;"></div>
<div class="b " style="left:932px;top:142px;width:47px;height:1px;background:#a0a0a0;"></div>
<div class="b " style="left:939px;top:143px;width:40px;height:1px;background:#fff;"></div>
<div class="b " style="left:939px;top:143px;width:1px;height:392px;background:#fff;"></div>
<div class="b " style="left:933px;top:143px;width:1px;height:392px;background:#fafafa;"></div>
<div class="b " style="left:932px;top:303px;width:7px;height:73px;background:#6d6d6d;"></div>
<svg class="b" style="left:932px;top:334px;" width="4" height="10" viewBox="0 0 4 10"><path d="M0 0 L4 5 L0 10 Z" fill="#fff"/></svg>
<svg class="b" style="left:938px;top:142px;" width="41" height="396" viewBox="938 142 41 396"><defs><linearGradient id="gSilver2" x1="0" y1="0" x2="0" y2="1"><stop offset="0" stop-color="#f2f2f2"/><stop offset="1" stop-color="#a8a8a8"/></linearGradient></defs><path d="M955 158 h6.4 M955 160.4 h6.4 M955 162.8 h6.4" stroke="#3a3a3a" stroke-width="1.1"/><path d="M959.4 164.4 h4.8 l-2.4 2.8 Z" fill="#3a3a3a"/><path d="M948 181.5 H970" stroke="#d0d0d0" stroke-width="1"/><rect x="943.5" y="185.5" width="31" height="31" rx="3.5" fill="#f3f3f3" stroke="#9c9c9c" stroke-width="0.9"/><path d="M949.8 211.2 L959.4 200.4" stroke="#3a3a3a" stroke-width="3.8" stroke-linecap="round"/><path d="M955 205.4 L960.4 199.4" stroke="#8a8a8a" stroke-width="3.8"/><circle cx="950.4" cy="210.6" r="1.1" fill="#fff"/><path d="M961 190.2 Q964.4 188.8 967 190.2 L963.8 194 L966.2 196.8 L970.2 194.4 Q970.8 197.6 968.4 199.8 Q965.6 201.8 962.4 200.6 L959.8 198 Q958.8 193.6 961 190.2 Z" fill="url(#gSilver)" stroke="#6a6a6a" stroke-width="0.8" stroke-linejoin="round"/><circle cx="961.8" cy="197.8" r="1.2" fill="#3a3a3a"/><path d="M950 227.2 H968 V237.6 L963.4 242.4 H950 Z" fill="url(#gPage)" stroke="#c4c4c4" stroke-width="0.7"/><path d="M968 237.6 L963.4 242.4 L963 237.4 Z" fill="#fff" stroke="#bdbdbd" stroke-width="0.6"/><path d="M948.4 230.6 L964 246.4 H948.4 Z" fill="#f6b010" stroke="#d88c08" stroke-width="0.8" stroke-linejoin="round"/><path d="M951.6 237.6 L957 243.4 H951.6 Z" fill="#fff" stroke="#e09a10" stroke-width="0.5"/><path d="M948 262 Q948 260.4 949.6 260.4 H955 L956.4 262 H968 Q969.4 262 969.4 263.4 V278 Q969.4 279.2 968 279.2 H949.4 Q948 279.2 948 278 Z" fill="#2f5fae"/><path d="M949 263.8 H968.4" stroke="#7fa4e4" stroke-width="0.9"/><path d="M948 266 H969.4 V278 Q969.4 279.2 968 279.2 H949.4 Q948 279.2 948 278 Z" fill="#4a78c8"/><rect x="951.2" y="267.8" width="15.6" height="13" fill="#fff" stroke="#d8d8d8" stroke-width="0.5"/><rect x="952.4" y="269" width="13.2" height="10" fill="#5a8ad8"/><path d="M952.4 269 h3.6 v10 h-3.6 Z" fill="#7a2030" opacity="0.7"/><circle cx="959.4" cy="272" r="2" fill="#f0a020"/><circle cx="957.4" cy="271" r="1.4" fill="#d03020"/><circle cx="961" cy="270.6" r="1.2" fill="#30a060"/><rect x="957" y="275.6" width="3" height="3.4" fill="#3a3a3a"/><circle cx="959.2" cy="305.4" r="10.6" fill="#e8e8e8" stroke="#a8a8a8" stroke-width="1"/><circle cx="959.2" cy="305.4" r="8.4" fill="url(#gComp)" stroke="#1a4aa0" stroke-width="0.7"/><path d="M966.4 298 L960.6 306.8 L957.8 304 Z" fill="#e02020"/><path d="M952 312.8 L957.8 304 L960.6 306.8 Z" fill="#f4f4f4"/><text x="951" y="345.2" font-family="Liberation Serif,serif" font-style="italic" font-size="19" stroke="#222" stroke-width="0.45" fill="#222" style="text-rendering:geometricPrecision">f</text><text x="958.2" y="344.6" font-family="Liberation Serif,serif" font-style="italic" font-size="12.6" textLength="11" lengthAdjust="spacingAndGlyphs" stroke="#222" stroke-width="0.25" fill="#222" style="text-rendering:geometricPrecision">(x)</text></svg>
<div class="b " style="left:1px;top:492px;width:930px;height:21px;background:#f0f0f0;"></div>
<svg class="b" style="left:6px;top:496px;" width="10" height="12" viewBox="0 0 10 12"><path d="M7.8 1.4 L2.6 6 L7.8 10.6" stroke="#5a5a5a" stroke-width="2" fill="none"/></svg>
<div class="b " style="left:21px;top:492px;width:384px;height:19px;background:#cdcdcd;"></div>
<svg class="b" style="left:890px;top:496px;" width="10" height="12" viewBox="0 0 10 12"><path d="M2.2 1.4 L7.4 6 L2.2 10.6" stroke="#5a5a5a" stroke-width="2" fill="none"/></svg>
<div class="b " style="left:906px;top:491px;width:5px;height:21px;background:#a0a0a0;"></div>
<div class="b " style="left:908px;top:494px;width:1px;height:14px;background:#000;"></div>
<div class="b " style="left:1px;top:513px;width:931px;height:25px;background:#f0f0f0;"></div>
<svg class="b" style="left:14px;top:515.5px;" width="11" height="17.5" viewBox="0 0 11 17.5"><path d="M1.4 0.8 V17" stroke="#a2a2a2" stroke-width="1.1" fill="none"/><path d="M9.7 0.3 V16.9 L2 8.6 Z" fill="#a2a2a2"/></svg>
<svg class="b" style="left:39.5px;top:515.5px;" width="9" height="17.5" viewBox="0 0 9 17.5"><path d="M8.5 0.3 V16.9 L0.2 8.6 Z" fill="#a2a2a2"/></svg>
<svg class="b" style="left:64.5px;top:515.5px;" width="9" height="17.5" viewBox="0 0 9 17.5"><path d="M0.4 0.3 V16.9 L8.1 8.6 Z" fill="#a2a2a2"/></svg>
<svg class="b" style="left:88.5px;top:515.5px;" width="11" height="17.5" viewBox="0 0 11 17.5"><path d="M10 0.8 V17" stroke="#a2a2a2" stroke-width="1.1" fill="none"/><path d="M0.2 0.3 V16.9 L8.1 8.6 Z" fill="#a2a2a2"/></svg>
<div class="b " style="left:117px;top:523px;width:17px;height:3px;background:#000;"></div>
<div class="b " style="left:124px;top:516px;width:3px;height:17px;background:#000;"></div>
<div class="b " style="left:144px;top:512px;width:79px;height:22px;background:#fff;"></div>
<div class="b " style="left:144px;top:534px;width:79px;height:3px;background:#6a6a6a;"></div>
<span class="t " style="left:160px;top:516.00px;font-size:15px;line-height:17.23px;color:#000;transform:scaleX(0.9255);transform-origin:0 0;">Sheet1</span>
<div class="b " style="left:1px;top:538px;width:978px;height:25px;background:#f0f0f0;"></div>
<div class="b " style="left:1px;top:537px;width:978px;height:1px;background:#a0a0a0;"></div>
<div class="b " style="left:138px;top:541px;width:1px;height:20px;background:#9d9d9d;"></div>
<div class="b " style="left:244px;top:541px;width:1px;height:20px;background:#9d9d9d;"></div>
<div class="b " style="left:394px;top:541px;width:1px;height:20px;background:#9d9d9d;"></div>
<div class="b " style="left:464px;top:541px;width:1px;height:20px;background:#9d9d9d;"></div>
<div class="b " style="left:495px;top:541px;width:1px;height:20px;background:#9d9d9d;"></div>
<div class="b " style="left:526px;top:541px;width:1px;height:20px;background:#9d9d9d;"></div>
<div class="b " style="left:557px;top:541px;width:1px;height:20px;background:#9d9d9d;"></div>
<div class="b " style="left:778px;top:541px;width:1px;height:20px;background:#9d9d9d;"></div>
<div class="b " style="left:923px;top:541px;width:1px;height:20px;background:#9d9d9d;"></div>
<span class="t " style="left:13px;top:543.00px;font-size:15px;line-height:17.23px;color:#000;transform:scaleX(0.9642);transform-origin:0 0;">Sheet 1 of 1</span>
<span class="t " style="left:150px;top:543.00px;font-size:15px;line-height:17.23px;color:#000;transform:scaleX(1.0100);transform-origin:0 0;">Default</span>
<span class="t " style="left:274px;top:543.00px;font-size:15px;line-height:17.23px;color:#000;transform:scaleX(0.9699);transform-origin:0 0;">English (India)</span>
<span class="t " style="left:613px;top:543.00px;font-size:15px;line-height:17.23px;color:#000;transform:scaleX(0.9350);transform-origin:0 0;">Average: ; Sum: 0</span>
<span class="t " style="left:933px;top:543.00px;font-size:15px;line-height:17.23px;color:#000;transform:scaleX(0.9123);transform-origin:0 0;">100%</span>
<div class="b " style="left:473px;top:547px;width:9px;height:6px;background:#9d9d9d;"></div>
<svg class="b" style="left:484px;top:545px;" width="5" height="11" viewBox="0 0 5 11"><path d="M0.5 0.5 H4.5 M2.5 0.5 V10.5 M0.5 10.5 H4.5" stroke="#b0b0b0" stroke-width="1" fill="none"/></svg>
<svg class="b" style="left:507px;top:545px;" width="10" height="11" viewBox="0 0 10 11"><path d="M0.5 0.5 H9.5 V10.5 H0.5 Z" stroke="#e08a8a" stroke-width="1" fill="none" stroke-dasharray="1.5 1"/><rect x="2" y="5.5" width="6" height="5" fill="none" stroke="#e08a8a" stroke-width="1"/><rect x="2" y="0.5" width="6" height="2" fill="none" stroke="#e9b0b0" stroke-width="0.8"/></svg>
<svg class="b" style="left:787px;top:545px;" width="12" height="12" viewBox="0 0 12 12"><circle cx="5.9" cy="5.8" r="4.6" fill="#f6f6f6" stroke="#5a5a5a" stroke-width="1.3"/><path d="M3.2 5.8 H8.6" stroke="#111" stroke-width="1.9"/></svg>
<div class="b " style="left:804px;top:551px;width:98px;height:1px;background:#6e6e6e;"></div>
<div class="b " style="left:804px;top:552px;width:98px;height:1px;background:#c8c8c8;"></div>
<div class="b " style="left:848px;top:546px;width:6px;height:10px;background:#fbfbfb;border:1px solid #777;border-radius:2px;"></div>
<svg class="b" style="left:906px;top:545px;" width="12" height="12" viewBox="0 0 12 12"><circle cx="5.8" cy="5.8" r="4.6" fill="#f6f6f6" stroke="#5a5a5a" stroke-width="1.3"/><path d="M3.1 5.8 H8.5 M5.8 3.1 V8.5" stroke="#111" stroke-width="1.9"/></svg>
<div class="b " style="left:1px;top:38px;width:1px;height:103px;background:#fbfbfb;"></div>
<div class="b " style="left:1px;top:171px;width:1px;height:22px;background:#fbfbfb;"></div>
<div class="b " style="left:1px;top:194px;width:1px;height:20px;background:#fbfbfb;"></div>
<div class="b " style="left:1px;top:215px;width:1px;height:20px;background:#fbfbfb;"></div>
<div class="b " style="left:1px;top:236px;width:1px;height:20px;background:#fbfbfb;"></div>
<div class="b " style="left:1px;top:257px;width:1px;height:20px;background:#fbfbfb;"></div>
<div class="b " style="left:1px;top:299px;width:1px;height:20px;background:#fbfbfb;"></div>
<div class="b " style="left:1px;top:320px;width:1px;height:20px;background:#fbfbfb;"></div>
<div class="b " style="left:1px;top:341px;width:1px;height:20px;background:#fbfbfb;"></div>
<div class="b " style="left:1px;top:362px;width:1px;height:20px;background:#fbfbfb;"></div>
<div class="b " style="left:1px;top:383px;width:1px;height:20px;background:#fbfbfb;"></div>
<div class="b " style="left:1px;top:404px;width:1px;height:20px;background:#fbfbfb;"></div>
<div class="b " style="left:1px;top:425px;width:1px;height:20px;background:#fbfbfb;"></div>
<div class="b " style="left:1px;top:446px;width:1px;height:20px;background:#fbfbfb;"></div>
<div class="b " style="left:1px;top:467px;width:1px;height:20px;background:#fbfbfb;"></div>
<div class="b " style="left:1px;top:488px;width:1px;height:4px;background:#fbfbfb;"></div>
<div class="b " style="left:1px;top:492px;width:1px;height:45px;background:#fbfbfb;"></div>
<div class="b " style="left:1px;top:538px;width:1px;height:25px;background:#fbfbfb;"></div>
<div class="b " style="left:978px;top:38px;width:1px;height:103px;background:#fbfbfb;"></div>
<div class="b " style="left:978px;top:143px;width:1px;height:392px;background:#fbfbfb;"></div>
<div class="b " style="left:978px;top:538px;width:1px;height:25px;background:#fbfbfb;"></div>
<div class="b " style="left:1px;top:562px;width:978px;height:1px;background:#fbfbfb;"></div>
</div>
</body></html>
